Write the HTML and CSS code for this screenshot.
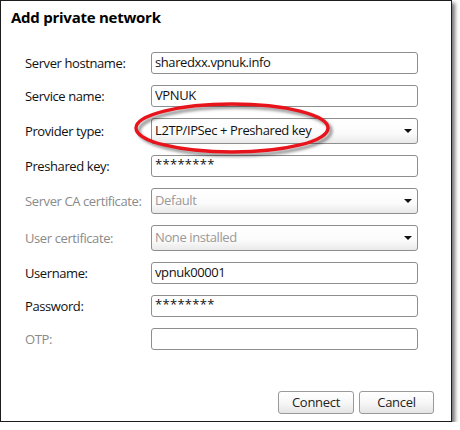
FILE: index.html
```html
<!DOCTYPE html>
<html>
<head>
<meta charset="utf-8">
<link rel="stylesheet" href="styles.css">
</head>
<body>
<div class="dialog">
  <div class="title">Add private network</div>
  <div class="form">
    <div class="label">Server hostname:</div>
    <div class="field">sharedxx.vpnuk.info</div>
    <div class="label">Service name:</div>
    <div class="field">VPNUK</div>
    <div class="label">Provider type:</div>
    <div class="field select">L2TP/IPSec + Preshared key<span class="arrow"></span></div>
    <div class="label">Preshared key:</div>
    <div class="field pw">********</div>
    <div class="label disabled">Server CA certificate:</div>
    <div class="field select disabled">Default<span class="arrow"></span></div>
    <div class="label disabled">User certificate:</div>
    <div class="field select disabled">None installed<span class="arrow"></span></div>
    <div class="label">Username:</div>
    <div class="field">vpnuk00001</div>
    <div class="label">Password:</div>
    <div class="field pw">********</div>
    <div class="label disabled">OTP:</div>
    <div class="field"></div>
  </div>
  <div class="actions">
    <div class="btn btn-connect">Connect</div>
    <div class="btn btn-cancel">Cancel</div>
  </div>
  <svg class="ring" width="210" height="66" viewBox="0 0 210 66">
    <defs>
      <filter id="blur" x="-10%" y="-30%" width="120%" height="160%">
        <feGaussianBlur stdDeviation="1.6"/>
      </filter>
    </defs>
    <ellipse cx="102" cy="31" rx="96" ry="24" fill="none" stroke="rgba(0,0,0,0.45)" stroke-width="3" filter="url(#blur)"/>
    <ellipse cx="99" cy="28" rx="96" ry="24" fill="none" stroke="#e8141c" stroke-width="3.4"/>
  </svg>
</div>
</body>
</html>
```
FILE: styles.css
```css
html, body {
  margin: 0;
  padding: 0;
  background: #fff;
}
body {
  font-family: "Open Sans", "Noto Sans", sans-serif;
  color: #111;
}
.dialog {
  position: relative;
  width: 450px;
  height: 420px;
  border: 1px solid #1c1c1c;
  background: #fff;
  display: flex;
  flex-direction: column;
  box-shadow: 3px 3px 4px rgba(0, 0, 0, 0.55);
}
.title {
  font-size: 15px;
  font-weight: bold;
  letter-spacing: -0.25px;
  line-height: 22px;
  padding: 5px 0 0 10px;
  height: 46px;
  box-sizing: border-box;
  color: #000;
}
.form {
  margin: 5px 0 0 24px;
  display: grid;
  grid-template-columns: 126px 267px;
  row-gap: 11px;
  align-items: center;
}
.label {
  font-size: 13px;
  letter-spacing: -0.4px;
  color: #111;
  white-space: nowrap;
}
.label.disabled {
  color: #8a8a8a;
}
.field {
  position: relative;
  height: 22px;
  box-sizing: border-box;
  border: 1px solid #8e8e8e;
  border-radius: 3px;
  padding: 0 3px;
  font-size: 13px;
  letter-spacing: -0.4px;
  line-height: 19px;
  color: #111;
  background: #fff;
}
.field.pw {
  letter-spacing: 0.3px;
  line-height: 16px;
}
.field.select {
  height: 26px;
  line-height: 23px;
  background: linear-gradient(#ffffff 0%, #fbfbfb 60%, #e9e9e9 100%);
}
.field.select.disabled {
  color: #999;
}
.arrow {
  position: absolute;
  right: 5px;
  top: 10px;
  width: 0;
  height: 0;
  border-left: 4px solid transparent;
  border-right: 4px solid transparent;
  border-top: 4px solid #111;
}
.actions {
  margin-top: auto;
  display: flex;
  justify-content: flex-end;
  gap: 5px;
  padding: 0 17px 7px 0;
}
.btn {
  height: 23px;
  box-sizing: border-box;
  border: 1px solid #9a9a9a;
  border-radius: 3px;
  background: linear-gradient(#ffffff 0%, #f6f6f6 55%, #e4e4e4 100%);
  font-size: 13px;
  letter-spacing: -0.3px;
  line-height: 21px;
  text-align: center;
  color: #222;
}
.btn-connect {
  width: 76px;
}
.btn-cancel {
  width: 75px;
}
.ring {
  position: absolute;
  left: 132px;
  top: 99px;
}
```
